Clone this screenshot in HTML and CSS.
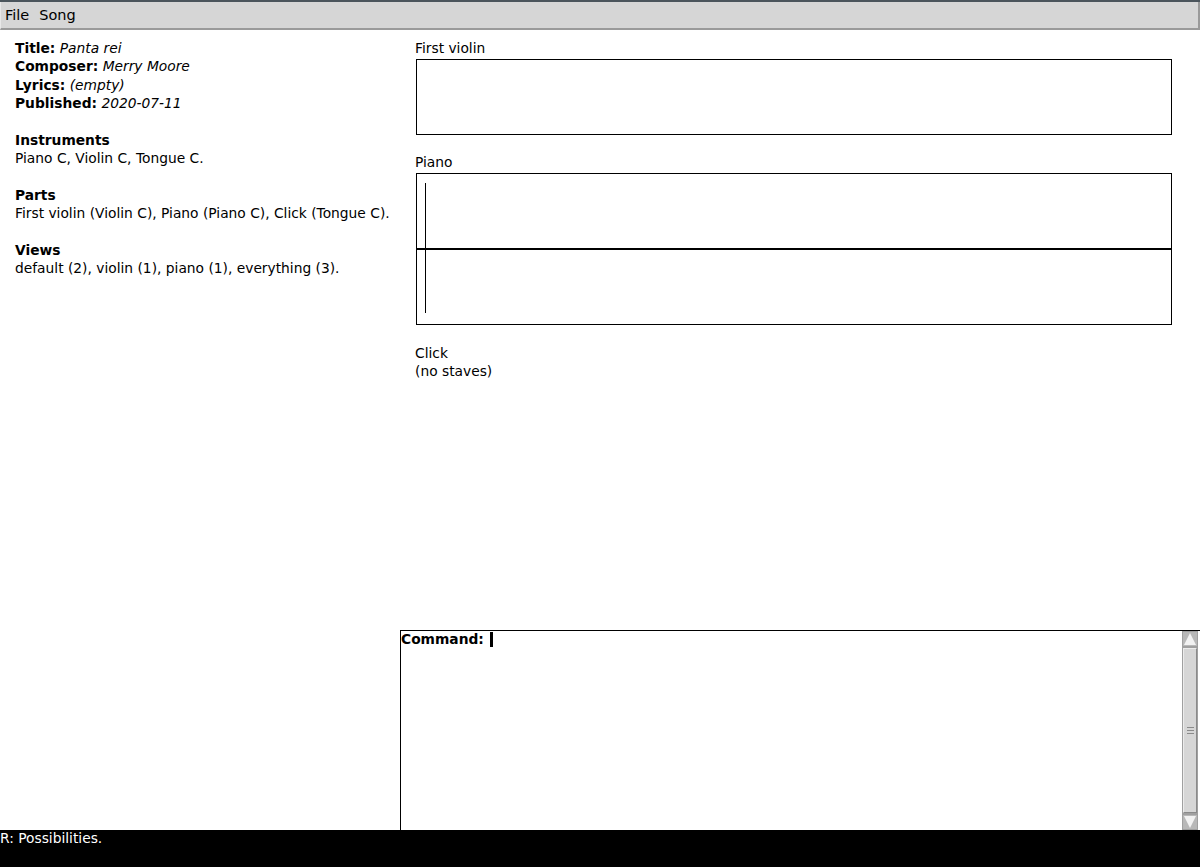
FILE: index.html
```html
<!DOCTYPE html>
<html>
<head>
<meta charset="utf-8">
<link rel="stylesheet" href="styles.css">
</head>
<body>
<div class="app">
  <div class="topline"></div>
  <div class="menubar">
    <span class="menu-item">File</span>
    <span class="menu-item">Song</span>
  </div>
  <div class="main">
    <div class="info">
      <div><b>Title:</b> <i>Panta rei</i></div>
      <div><b>Composer:</b> <i>Merry Moore</i></div>
      <div><b>Lyrics:</b> <i>(empty)</i></div>
      <div><b>Published:</b> <i>2020-07-11</i></div>
      <div class="blank"></div>
      <div><b>Instruments</b></div>
      <div>Piano C, Violin C, Tongue C.</div>
      <div class="blank"></div>
      <div><b>Parts</b></div>
      <div>First violin (Violin C), Piano (Piano C), Click (Tongue C).</div>
      <div class="blank"></div>
      <div><b>Views</b></div>
      <div>default (2), violin (1), piano (1), everything (3).</div>
    </div>
    <div class="score">
      <div class="part">
        <div class="part-name">First violin</div>
        <div class="staves">
          <div class="staff"></div>
        </div>
      </div>
      <div class="part">
        <div class="part-name">Piano</div>
        <div class="staves">
          <div class="staff"></div>
          <div class="staff staff-split"></div>
          <div class="barline"></div>
        </div>
      </div>
      <div class="part part-empty">
        <div class="part-name">Click</div>
        <div>(no staves)</div>
      </div>
    </div>
  </div>
  <div class="bottom">
    <div class="bottom-left"></div>
    <div class="command">
      <div class="command-text"><b>Command:</b><span class="cursor"></span></div>
      <div class="scrollbar">
        <div class="sb-btn sb-up"><div class="tri-up"></div></div>
        <div class="sb-track">
          <div class="sb-thumb"><div class="grip"></div></div>
        </div>
        <div class="sb-btn sb-down"><div class="tri-down"></div></div>
      </div>
    </div>
  </div>
  <div class="status">R: Possibilities.</div>
</div>
</body>
</html>
```

FILE: styles.css
```css
html, body {
  margin: 0;
  padding: 0;
  background: #fff;
}
body {
  font-family: "DejaVu Sans", sans-serif;
  font-size: 13.8px;
  color: #000;
}
.app {
  width: 1200px;
  height: 867px;
  display: flex;
  flex-direction: column;
  overflow: hidden;
}
.topline {
  height: 2px;
  background: #4b555c;
}
.menubar {
  height: 26px;
  background: #d6d6d6;
  border-bottom: 2px solid #9a9a9a;
  border-right: 2px solid #9a9a9a;
  border-left: 1px solid #e8e8e8;
  display: flex;
  align-items: center;
  font-size: 14.5px;
  padding-left: 4px;
  box-sizing: content-box;
}
.menu-item {
  margin-right: 10px;
}
.main {
  flex: 1;
  display: flex;
  line-height: 18.33px;
}
.info {
  width: 385px;
  padding: 9px 0 0 15px;
}
.blank {
  height: 18.33px;
}
.score {
  flex: 1;
  padding: 9px 0 0 15px;
}
.part {
  margin-bottom: 17.4px;
}
.part-empty {
  padding-top: 1.5px;
}
.staves {
  position: relative;
  margin-top: 2px;
  margin-left: 1px;
  width: 754px;
  border: 1px solid #000;
}
.staff {
  height: 74px;
}
.staff-split {
  border-top: 2px solid #000;
}
.barline {
  position: absolute;
  left: 8px;
  top: 9px;
  bottom: 11px;
  width: 1px;
  background: #000;
}
.bottom {
  height: 200px;
  display: flex;
}
.bottom-left {
  width: 400px;
}
.command {
  flex: 1;
  border-top: 1px solid #000;
  border-left: 1px solid #000;
  display: flex;
}
.command-text {
  flex: 1;
  line-height: 16px;
}
.cursor {
  display: inline-block;
  width: 3px;
  height: 15px;
  margin-left: 6px;
  background: #000;
  vertical-align: -3px;
}
.scrollbar {
  width: 16px;
  margin-right: 2px;
  display: flex;
  flex-direction: column;
  background: #a0a0a0;
}
.sb-btn {
  height: 16px;
  background: #b8b8b8;
  border: 1px solid #a0a0a0;
  display: flex;
  align-items: center;
  justify-content: center;
  box-sizing: border-box;
}
.tri-up {
  width: 0;
  height: 0;
  border-left: 6px solid transparent;
  border-right: 6px solid transparent;
  border-bottom: 12px solid #f2f2f2;
}
.tri-down {
  width: 0;
  height: 0;
  border-left: 6px solid transparent;
  border-right: 6px solid transparent;
  border-top: 12px solid #f2f2f2;
}
.sb-track {
  flex: 1;
  padding: 1px;
  display: flex;
}
.sb-thumb {
  flex: 1;
  background: #d6d6d6;
  border-left: 1px solid #ececec;
  border-top: 1px solid #ececec;
  border-right: 1px solid #8a8a8a;
  border-bottom: 1px solid #8a8a8a;
  display: flex;
  align-items: center;
  justify-content: center;
}
.grip {
  width: 7px;
  height: 5px;
  border-top: 1px solid #8a8a8a;
  border-bottom: 1px solid #8a8a8a;
  position: relative;
}
.grip::after {
  content: "";
  position: absolute;
  left: 0;
  right: 0;
  top: 2px;
  height: 1px;
  background: #8a8a8a;
}
.status {
  height: 37px;
  background: #000;
  color: #fff;
  line-height: 17px;
}
```
